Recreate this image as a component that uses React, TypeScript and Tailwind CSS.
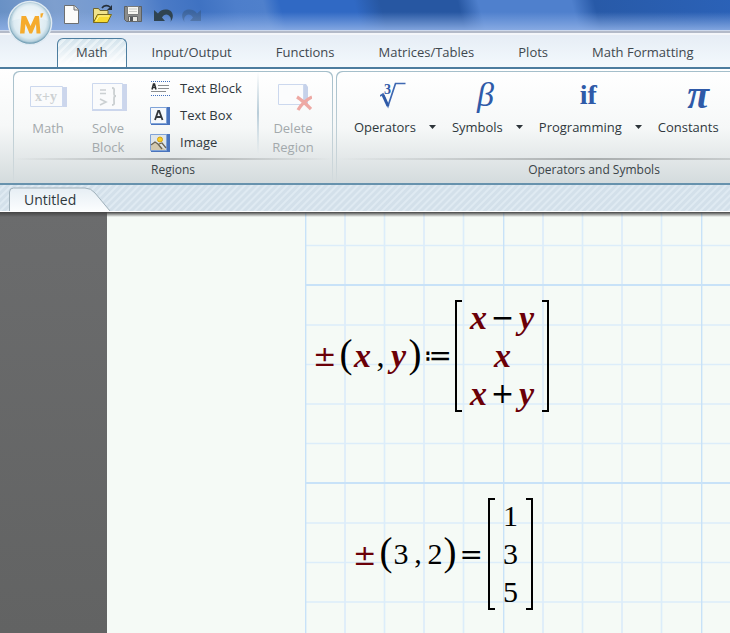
import React from "react";

const HATCH = "bg-[repeating-linear-gradient(135deg,#d3e0ea_0px,#d3e0ea_2px,#dfeaf2_3px,#dfeaf2_4px,#d3e0ea_5px)]";

function AppLogo() {
  return (
    <svg width="46" height="46" viewBox="0 0 46 46" aria-hidden="true">
      <defs>
        <radialGradient id="orb" cx="50%" cy="48%" r="52%">
          <stop offset="0" stopColor="#f7fbfc" />
          <stop offset="0.72" stopColor="#dcebf2" />
          <stop offset="0.87" stopColor="#b4cfdc" />
          <stop offset="0.95" stopColor="#6d9bb2" />
          <stop offset="1" stopColor="#4a7f9c" />
        </radialGradient>
      </defs>
      <circle cx="23" cy="23" r="21.500" fill="url(#orb)" stroke="#dfeaf2" strokeWidth="1.600" />
      <path d="M5 21a18 18 0 0 1 36 0c-8-4-28-4-36 0z" fill="#fff" opacity="0.3" />
      <path d="M13 33.500L14.500 16H19l4.500 10L28 16h4l1.500 17.500h-4L29 24l-4 9.500h-2.500L18.500 24l-1 9.500z" fill="#f5ab2d" />
      <path d="M33.500 13.500l3-0.500-1.500 4.500h-1.500z" fill="#f5ab2d" />
    </svg>
  );
}

function NewIcon() {
  return (
    <svg width="20" height="22" viewBox="0 0 20 22" aria-hidden="true">
      <path d="M2.500 1.500h10l4 4v14h-14z" fill="#fcfcfa" stroke="#6d6f70" />
      <path d="M12 1.500v4.500h4.500" fill="#e2e2df" stroke="#6d6f70" />
    </svg>
  );
}

function OpenIcon() {
  return (
    <svg width="22" height="22" viewBox="0 0 22 22" aria-hidden="true">
      <path d="M2.500 18.500V4.500h5l1.500 2h8v4" fill="#f0e38b" stroke="#6f6530" />
      <path d="M2.500 18.500l4-8h14l-4 8z" fill="#f8dc33" stroke="#7a6b1e" />
      <path d="M5 17l3-5h10" fill="none" stroke="#fdf3a3" />
      <path d="M11 4c2-3 6-3 8-1" fill="none" stroke="#252f3a" strokeWidth="1.600" />
      <path d="M21 1v5h-5z" fill="#252f3a" />
    </svg>
  );
}

function SaveIcon() {
  return (
    <svg width="20" height="20" viewBox="0 0 20 20" aria-hidden="true">
      <path d="M2.500 1.500h17v15h-15l-2-2z" fill="#8b8d8c" stroke="#5d6163" />
      <path d="M5.500 1.500h11v8h-11z" fill="#f7f7f2" stroke="#7a7c7c" />
      <path d="M7 4h8M7 6.500h8" stroke="#c8c9c5" />
      <path d="M6.500 11.500h9v5h-9z" fill="#e8e8e3" stroke="#65686a" />
      <path d="M8 12h3v4H8z" fill="#54585b" />
    </svg>
  );
}

function UndoIcon() {
  return (
    <svg width="22" height="16" viewBox="0 0 22 16" aria-hidden="true">
      <path d="M3 3v11h11l-3-3.500c2-3.500 6-4.500 8.500 0 0.500 1.500 0.500 3 0 4.500C24 9 21.500 3 16 2.500 12 2 9 3.500 7 6.500z" fill="#2f4350" />
    </svg>
  );
}

function MathRegionIcon() {
  return (
    <svg width="38" height="26" viewBox="0 0 38 26" aria-hidden="true">
      <path d="M2 3h36v20H2z" fill="#ccd6ec" />
      <path d="M1.500 2.500h32v20h-32z" fill="#fafbfc" stroke="#ccd8ee" />
      <text x="6" y="17" fontFamily="Liberation Serif, serif" fontSize="14" fontWeight="700" fill="#cdd1d3">x+y</text>
    </svg>
  );
}

function SolveIcon() {
  return (
    <svg width="38" height="30" viewBox="0 0 38 30" aria-hidden="true">
      <path d="M3 2h35v27H3z" fill="#ccd6ec" />
      <path d="M3.500 1.500h30v26h-30z" fill="#fafbfc" stroke="#ccd8ee" />
      <path d="M11 8h6M11 11.500h6M11 17l6 3-6 3" fill="none" stroke="#cbd0d2" strokeWidth="1.600" />
      <path d="M23 6c3 0 2 2 2 5 0 2 0 3 2 3-2 0-2 1-2 4s1 5-2 5" fill="none" stroke="#cbd0d2" strokeWidth="1.800" />
    </svg>
  );
}

function TextBlockIcon() {
  return (
    <svg width="20" height="18" viewBox="0 0 20 18" aria-hidden="true">
      <path d="M1 1.500h19M1 15.500h19" stroke="#3f6fbe" strokeDasharray="1 1" />
      <path d="M2 9.500L3.500 4h1L6 9.500M2.500 7.500h3" fill="none" stroke="#2a2d30" strokeWidth="1.500" />
      <path d="M8 5.500h11M8 8.500h11M1 11.500h15" stroke="#8b8e90" />
    </svg>
  );
}

function TextBoxIcon() {
  return (
    <svg width="20" height="20" viewBox="0 0 20 20" aria-hidden="true">
      <path d="M1 1h19v18H1z" fill="#4a74bd" />
      <path d="M0.500 1.500h16v16h-16z" fill="#f5f8fc" stroke="#7fa3d8" />
      <path d="M5 14L8.200 5h1L12.500 14M6.500 11h4.500" fill="none" stroke="#34383c" strokeWidth="1.800" />
    </svg>
  );
}

function ImageIcon() {
  return (
    <svg width="20" height="20" viewBox="0 0 20 20" aria-hidden="true">
      <path d="M1 1h19v18H1z" fill="#4a74bd" />
      <path d="M0.500 1.500h16v16h-16z" fill="#dfe6ea" stroke="#7fa3d8" />
      <circle cx="10" cy="6.500" r="2.500" fill="#f8cf27" stroke="#d5a112" />
      <path d="M1 17v-4l4-4 3 2 8 6z" fill="#d2c8ae" />
      <path d="M1 12l4-3 3 2 4 5M9 11l3-1 4 5" fill="none" stroke="#6b6454" strokeWidth="1.300" />
    </svg>
  );
}

function DeleteIcon() {
  return (
    <svg width="38" height="30" viewBox="0 0 38 30" aria-hidden="true">
      <path d="M28 2h4l2 3v18h-6z" fill="#c6d2ea" />
      <path d="M4.500 2.500h25v20h-25z" fill="#fbfcfd" stroke="#ccd8ee" />
      <path d="M23 15c5 3 9 7 14 12M38 15c-6 3-11 8-14 13" fill="none" stroke="#eea9a4" strokeWidth="3.300" />
    </svg>
  );
}

function RootIcon() {
  return (
    <svg width="30" height="30" viewBox="0 0 30 30" aria-hidden="true">
      <text x="4" y="14" fontFamily="Liberation Serif, serif" fontSize="14" fontWeight="700" fill="#2f5aa8">3</text>
      <path d="M0 16l3-2 5 12L15.500 3.500h10" fill="none" stroke="#3f68b2" strokeWidth="1.700" />
      <path d="M3 15l5 11" stroke="#2f5aa8" strokeWidth="3" />
    </svg>
  );
}

function Caret() {
  return (
    <svg width="7" height="4" viewBox="0 0 7 4" aria-hidden="true">
      <path d="M0 0h7L3.500 4z" fill="#2d3439" />
    </svg>
  );
}

const tabs = ["Math", "Input/Output", "Functions", "Matrices/Tables", "Plots", "Math Formatting"];

const quickActions: { label: string; icon: React.ReactNode; dim?: boolean }[] = [
  { label: "New", icon: <NewIcon /> },
  { label: "Open", icon: <OpenIcon /> },
  { label: "Save", icon: <SaveIcon /> },
  { label: "Undo", icon: <UndoIcon /> },
  { label: "Redo", icon: <span className="block -scale-x-100"><UndoIcon /></span>, dim: true },
];

const regionItems = [
  { label: "Text Block", icon: <TextBlockIcon /> },
  { label: "Text Box", icon: <TextBoxIcon /> },
  { label: "Image", icon: <ImageIcon /> },
];

const symbolMenus: { label: string; icon: React.ReactNode }[] = [
  { label: "Operators", icon: <RootIcon /> },
  { label: "Symbols", icon: <span className="pr-[4px] text-[34px] italic">β</span> },
  { label: "Programming", icon: <span className="pr-[4px] text-[28px] font-bold">if</span> },
  { label: "Constants", icon: <span className="text-[40px] font-bold italic">π</span> },
];

function TitleBar() {
  return (
    <div className="relative h-[35px] border-b-2 border-[#f4f6f9] bg-[linear-gradient(to_bottom,transparent_12px,#8fb0e6_33px),linear-gradient(75deg,#668fc4_0px,#7e9fce_60px,#7399d2_120px,#4a7ac6_165px,#3f72c2_200px,#4d7ecb_235px,#4f80cc_262px,#3069c4_278px,#3069c4_350px,#2757a2_375px,#2757a2_450px,#4f80cd_470px,#4f80cd_560px,#285aa8_582px,#2b62b8_720px)]">
      <div className="flex h-[30px] items-center gap-[9px] pl-[62px]">
        {quickActions.map((a) => (
          <button key={a.label} aria-label={a.label} disabled={a.dim} className={a.dim ? "opacity-30" : ""}>
            {a.icon}
          </button>
        ))}
      </div>
      <div className="h-[3px] border-t border-[#cdd8ea] bg-[#b3bac8]" />
      <button aria-label="Application menu" className="absolute left-[7px] top-0 z-10">
        <AppLogo />
      </button>
    </div>
  );
}

function TabStrip() {
  return (
    <nav className="flex h-[34px] items-end gap-[6px] overflow-hidden border-b-2 border-[#4c7d9f] bg-gradient-to-b from-[#e6edf5] to-[#f3f9fd] pl-[57px]">
      {tabs.map((t, i) => (
        <button
          key={t}
          className={
            "h-[29px] shrink-0 whitespace-nowrap px-[18px] border " +
            (i === 0
              ? "rounded-t-md border-[#4c7d9f] border-b-0 bg-[linear-gradient(to_bottom,transparent,#ffffff_26px),repeating-linear-gradient(135deg,#d3e3ec_0px,#d3e3ec_3px,#e6f0f5_4px,#e6f0f5_6px)]"
              : "border-transparent")
          }
        >
          {t}
        </button>
      ))}
    </nav>
  );
}

function RibbonGroup({ title, className, children }: { title: string; className: string; children: React.ReactNode }) {
  return (
    <section className={"shrink-0 rounded-t-md bg-gradient-to-b from-[#a5bfcb] to-[#d4dbdd] px-px pt-px " + className}>
      <div className="h-full rounded-t-md bg-gradient-to-b from-white via-[#f6f8f8] to-[#d4dbdd]">
        <div className="h-[86px]">{children}</div>
        <div className="h-[2px] bg-gradient-to-r from-transparent via-[#a9adae] to-transparent" />
        <h2 className="text-center text-[12px] leading-[20px] text-[#3a4348]">{title}</h2>
      </div>
    </section>
  );
}

function BigButton({ icon, children, className }: { icon: React.ReactNode; children: React.ReactNode; className: string }) {
  return (
    <button disabled className={"flex flex-col items-center leading-[19px] text-[#a3a9ac] " + className}>
      <span className="flex h-[38px] items-center pt-[12px]">{icon}</span>
      <span className="pt-[9px]">{children}</span>
    </button>
  );
}

function Ribbon() {
  return (
    <div className="flex gap-[3px] overflow-hidden border-b-2 border-[#6792ad] bg-gradient-to-b from-white via-[#f6f8f8] to-[#d4dbdd] pl-[13px] pt-[2px] text-[#2f383d]">
      <RibbonGroup title="Regions" className="h-[112px] w-[320px]">
        <div className="flex">
          <BigButton icon={<MathRegionIcon />} className="ml-[4px] w-[60px]">Math</BigButton>
          <BigButton icon={<SolveIcon />} className="w-[60px]">Solve<br />Block</BigButton>
          <div className="ml-[12px] flex w-[107px] flex-col pt-[3px]">
            {regionItems.map((r) => (
              <button key={r.label} className="flex h-[27px] items-center gap-[10px] whitespace-nowrap">
                {r.icon}
                {r.label}
              </button>
            ))}
          </div>
          <div className="h-[82px] w-[2px] bg-gradient-to-b from-transparent via-[#b9cdd9] to-transparent" />
          <BigButton icon={<DeleteIcon />} className="ml-[2px] w-[64px]">Delete<br />Region</BigButton>
        </div>
      </RibbonGroup>
      <RibbonGroup title="Operators and Symbols" className="h-[112px] w-[516px]">
        <div className="flex gap-[16px] pl-[17px]">
          {symbolMenus.map((m) => (
            <button key={m.label} className="flex flex-col items-center">
              <span className="flex h-[46px] items-center font-['Liberation_Serif',serif] leading-none text-[#2f5aa8]">{m.icon}</span>
              <span className="flex items-center gap-[13px] leading-[18px]">
                {m.label}
                <Caret />
              </span>
            </button>
          ))}
        </div>
      </RibbonGroup>
    </div>
  );
}

function DocumentTabs() {
  return (
    <div className={"h-[27px] border-b border-white pl-[9px] pt-[2px] " + HATCH}>
      <button className="relative h-[24px] w-[102px] pl-[15px] text-left text-[14px] leading-[26px] text-[#2f383d]">
        <svg className="absolute inset-0" width="102" height="24" viewBox="0 0 102 24" aria-hidden="true">
          <defs>
            <linearGradient id="docTab" x1="0" y1="0" x2="0" y2="1">
              <stop offset="0" stopColor="#e6eef4" />
              <stop offset="1" stopColor="#fbfdfe" />
            </linearGradient>
          </defs>
          <path d="M0.500 24V5q0-4 4-4H76q6 0 10 5l15 18" fill="url(#docTab)" stroke="#9fb0ba" />
        </svg>
        <span className="relative">Untitled</span>
      </button>
    </div>
  );
}

function Grid() {
  return (
    <svg className="absolute inset-0 h-full w-full" aria-hidden="true">
      <defs>
        <pattern id="grid" y="72" width="198" height="198" patternUnits="userSpaceOnUse">
          <path d="M40 0v198M79.500 0v198M119 0v198M158.500 0v198M0 41h198M0 80.500h198M0 120h198M0 159.500h198" stroke="#dcedfa" strokeWidth="1.700" />
          <path d="M0.500 0v198M0 1h198" stroke="#c8e2f8" strokeWidth="1.800" />
        </pattern>
      </defs>
      <rect width="100%" height="100%" fill="url(#grid)" />
    </svg>
  );
}

function Name({ children }: { children: React.ReactNode }) {
  return <span className="w-[20px] text-center text-[34px] font-bold italic text-[#6b0008]">{children}</span>;
}

function Op({ children, className = "" }: { children: React.ReactNode; className?: string }) {
  return <span className={"text-center font-['DejaVu_Sans',sans-serif] text-[28px] " + className}>{children}</span>;
}

function Paren({ children }: { children: React.ReactNode }) {
  return <span className="pb-[6px] text-[39px]">{children}</span>;
}

function Matrix({ rows, className }: { rows: React.ReactNode[]; className: string }) {
  return (
    <span className={"flex h-[112px] items-stretch " + className}>
      <span className="w-[7px] border-2 border-r-0 border-black" />
      <span className="flex flex-1 flex-col justify-center">
        {rows.map((r, i) => (
          <span key={i} className="flex h-[38px] shrink-0 items-center justify-center">{r}</span>
        ))}
      </span>
      <span className="w-[7px] border-2 border-l-0 border-black" />
    </span>
  );
}

function Worksheet() {
  return (
    <main className="relative flex flex-1 bg-[#f5faf6]">
      <div className="w-[107px] shrink-0 bg-gradient-to-b from-[#6b6c6d] to-[#626363]" />
      <div className="relative ml-[198px] flex-1 overflow-hidden font-['Liberation_Serif',serif] leading-none text-black">
        <Grid />
        <div className="absolute left-[8px] top-[88px] flex items-center">
          <span className="pt-[2px] text-[#6b0008]"><Op>±</Op></span>
          <span className="ml-[3px] flex"><Paren>(</Paren></span>
          <Name>x</Name>
          <span className="w-[16px] pb-[2px] text-center text-[32px]">,</span>
          <Name>y</Name>
          <Paren>)</Paren>
          <span className="ml-[2px] flex items-center"><Op>≔</Op></span>
          <Matrix
            className="ml-[4px] w-[94px]"
            rows={[
              <><Name>x</Name><Op className="w-[28px]">−</Op><Name>y</Name></>,
              <Name>x</Name>,
              <><Name>x</Name><Op className="w-[28px]">+</Op><Name>y</Name></>,
            ]}
          />
        </div>
        <div className="absolute left-[48px] top-[286px] flex items-center gap-px text-[30px]">
          <span className="pt-[2px] text-[#6b0008]"><Op>±</Op></span>
          <span className="ml-[2px] flex"><Paren>(</Paren></span>
          <span>3</span>
          <span className="w-[17px] pb-[2px] text-center">,</span>
          <span>2</span>
          <Paren>)</Paren>
          <span className="ml-[2px]"><Op>=</Op></span>
          <Matrix className="ml-[4px] w-[45px]" rows={["1", "3", "5"]} />
        </div>
      </div>
      <div className="absolute inset-x-0 top-0 h-[5px] bg-gradient-to-b from-[#444] to-transparent" />
    </main>
  );
}

export default function App() {
  return (
    <div className="flex min-h-screen flex-col overflow-hidden bg-white font-['Open_Sans','Noto_Sans',sans-serif] text-[13px] text-[#3f484f]">
      <TitleBar />
      <TabStrip />
      <Ribbon />
      <DocumentTabs />
      <Worksheet />
    </div>
  );
}
